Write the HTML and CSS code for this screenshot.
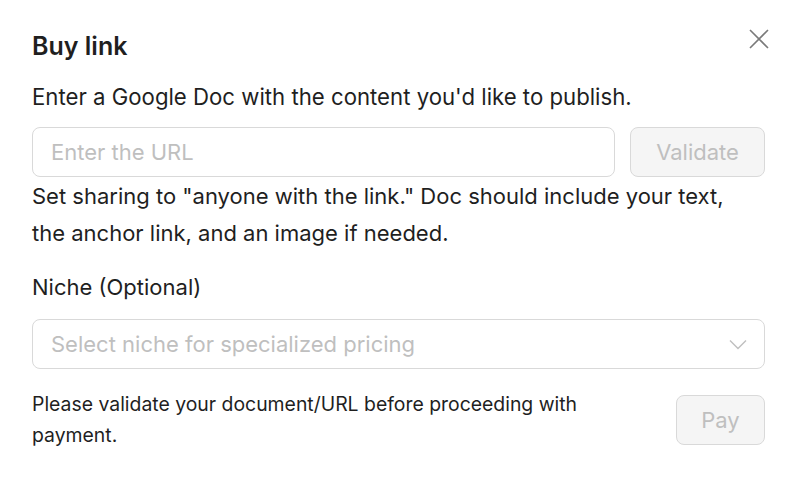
FILE: index.html
```html
<!DOCTYPE html>
<html lang="en">
<head>
<meta charset="utf-8">
<title>Buy link</title>
<link rel="stylesheet" href="styles.css">
</head>
<body>
<div class="modal">
  <div class="header">
    <h1 class="title">Buy link</h1>
    <button class="close" aria-label="Close">
      <svg width="20" height="20" viewBox="0 0 20 20"><path d="M1 1 L19 19 M19 1 L1 19" stroke="#7a7a7a" stroke-width="1.6" fill="none"/></svg>
    </button>
  </div>
  <p class="lead">Enter a Google Doc with the content you'd like to publish.</p>
  <div class="url-row">
    <div class="input"><span class="placeholder">Enter the URL</span></div>
    <button class="btn btn-validate" disabled>Validate</button>
  </div>
  <p class="help">Set sharing to "anyone with the link." Doc should include your text, the anchor link, and an image if needed.</p>
  <div class="label">Niche (Optional)</div>
  <div class="select">
    <span class="placeholder">Select niche for specialized pricing</span>
    <svg class="chev" width="18" height="11" viewBox="0 0 18 11"><path d="M1 1.5 L9 9.5 L17 1.5" stroke="#bfbfbf" stroke-width="1.4" fill="none"/></svg>
  </div>
  <div class="footer">
    <p class="note">Please validate your document/URL before proceeding with payment.</p>
    <button class="btn btn-pay" disabled>Pay</button>
  </div>
</div>
</body>
</html>
```

FILE: styles.css
```css
* { box-sizing: border-box; }
html, body { margin: 0; padding: 0; background: #fff; }
body {
  font-family: Inter, "Helvetica Neue", Arial, sans-serif;
  color: #1f1f1f;
  width: 800px;
  height: 495px;
  overflow: hidden;
}
.modal {
  padding: 30px 35px 0 32px;
}
.header {
  display: flex;
  justify-content: space-between;
  align-items: flex-start;
}
.title {
  margin: 0;
  font-size: 25px;
  line-height: 32px;
  font-weight: 600;
}
.close {
  border: 0;
  background: none;
  padding: 0;
  margin: -1px -4px 0 0;
  width: 20px;
  height: 20px;
  display: block;
}
.close svg { display: block; }
.lead {
  margin: 19px 0 0;
  font-size: 22.2px;
  line-height: 32px;
}
.url-row {
  display: flex;
  gap: 15px;
  margin-top: 14px;
}
.input, .select {
  height: 50px;
  border: 1px solid #d9d9d9;
  border-radius: 8px;
  display: flex;
  align-items: center;
  padding: 0 18px;
  font-size: 22px;
}
.input { flex: 1; }
.placeholder { color: #bfbfbf; }
.btn {
  height: 50px;
  border: 1px solid #d9d9d9;
  background: #f5f5f5;
  border-radius: 8px;
  color: #bfbfbf;
  font-family: inherit;
  font-size: 22px;
  padding: 0;
}
.btn-validate { width: 135px; }
.help {
  margin: 1px 0 0;
  font-size: 22px;
  line-height: 37px;
  max-width: 715px;
}
.label {
  margin-top: 19px;
  font-size: 22px;
  line-height: 32px;
}
.select {
  margin-top: 16px;
  justify-content: space-between;
  padding-right: 17px;
}
.chev { display: block; }
.footer {
  display: flex;
  align-items: center;
  justify-content: space-between;
  margin-top: 20px;
}
.note {
  margin: 0;
  font-size: 19.4px;
  line-height: 31px;
  max-width: 590px;
}
.btn-pay { width: 89px; }
```
